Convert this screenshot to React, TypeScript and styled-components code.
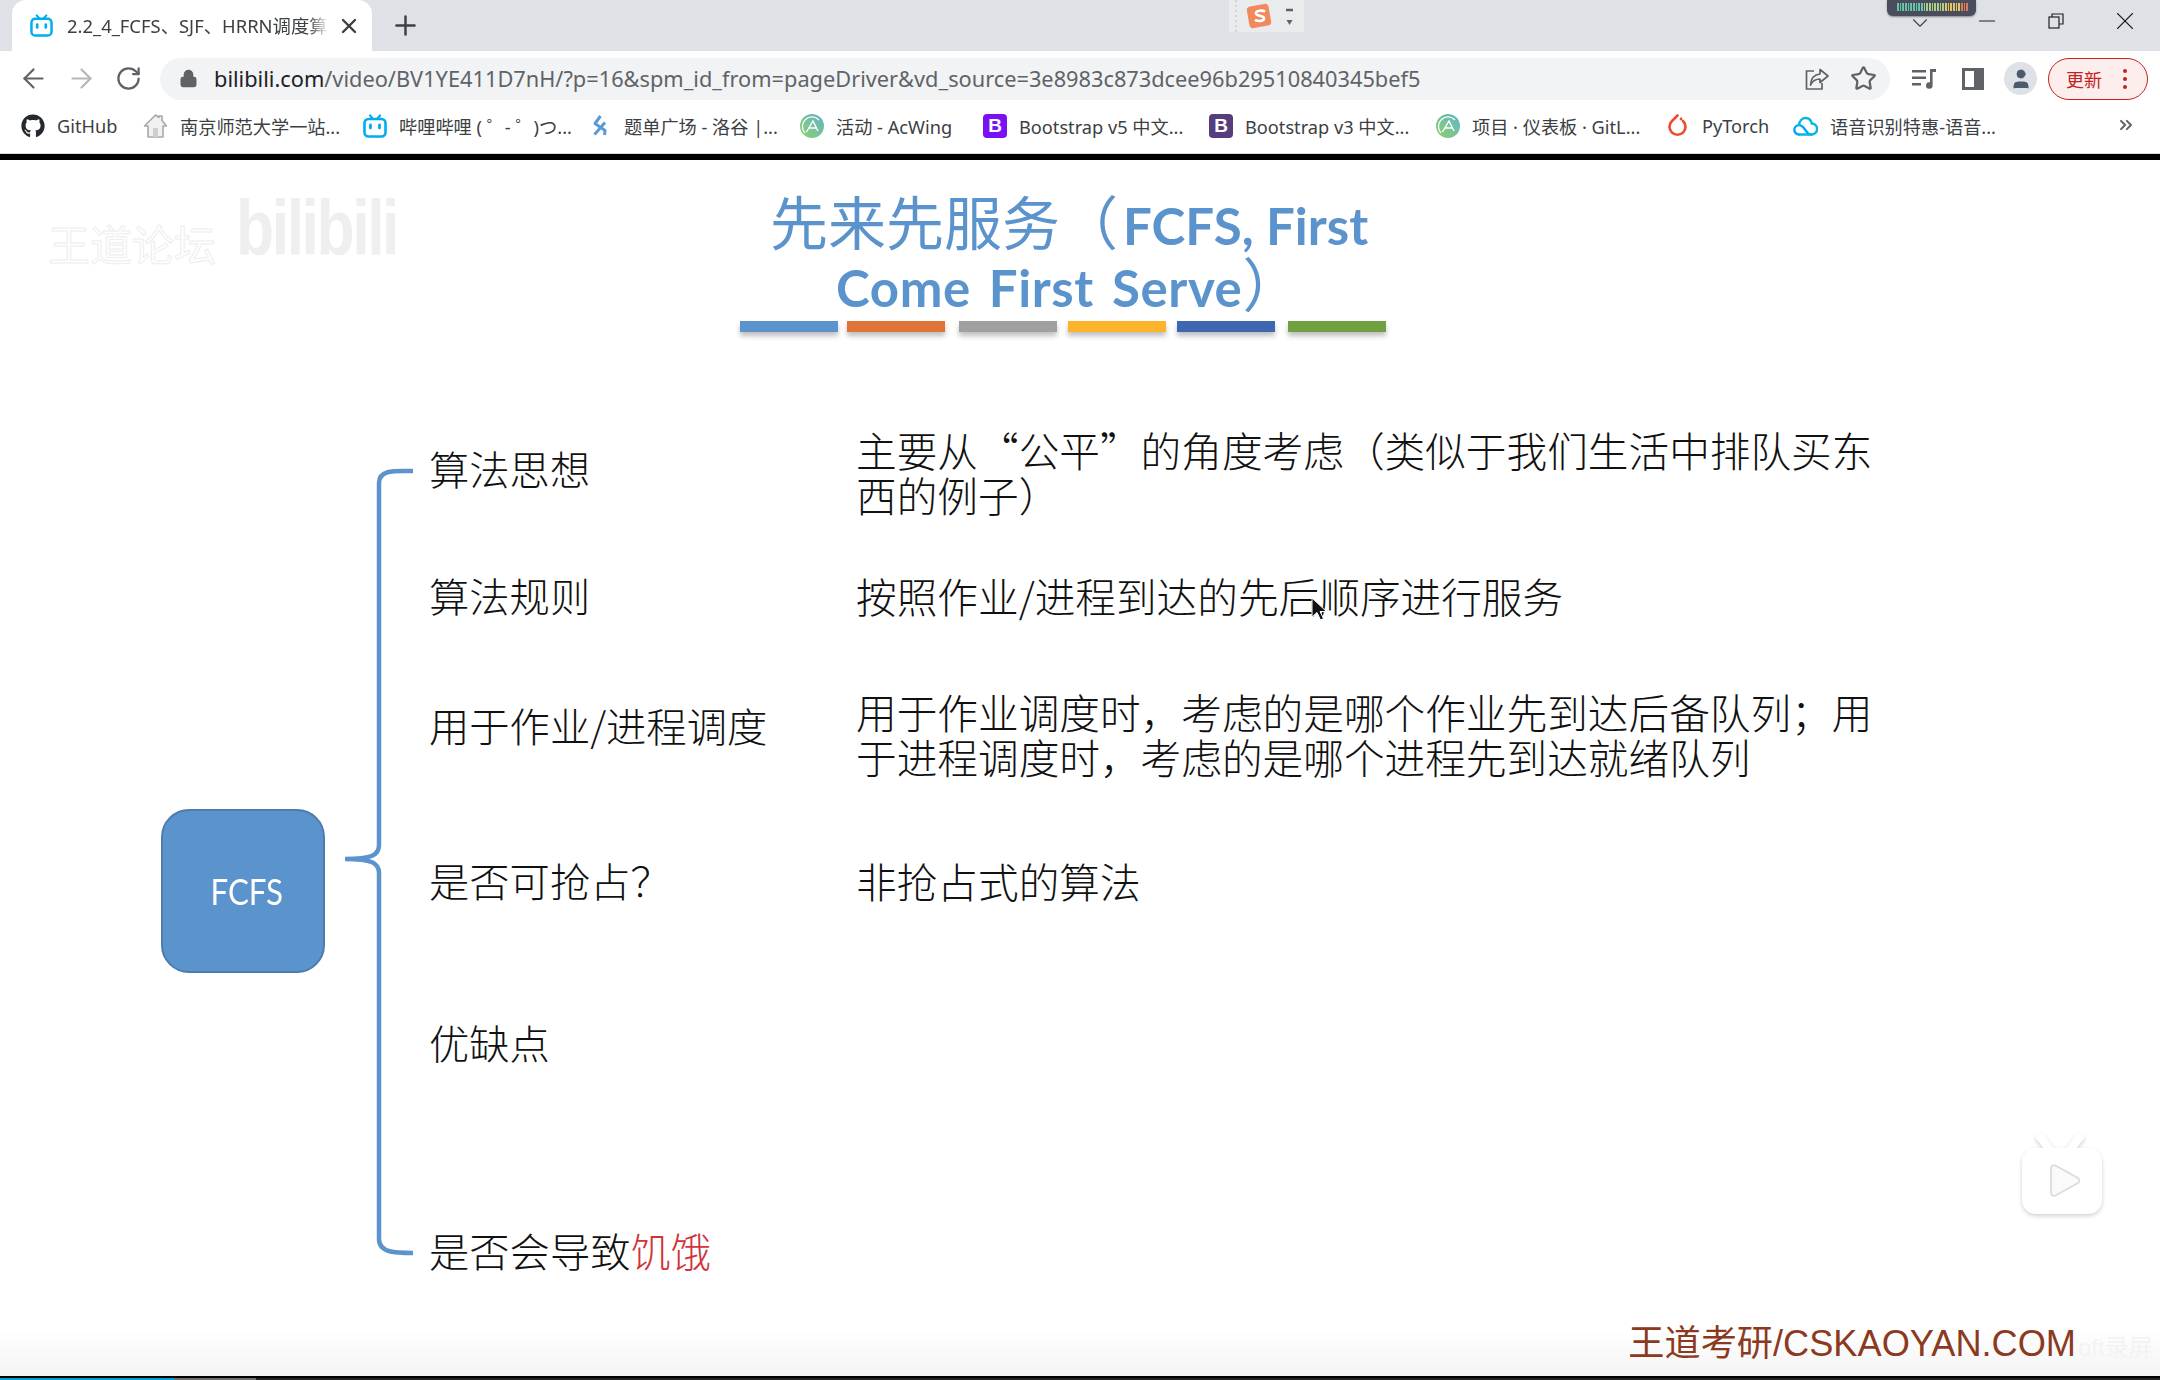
import React from 'react';
import styled, { createGlobalStyle } from 'styled-components';
import { FaGithub } from 'react-icons/fa';
import { ArrowLeft, ArrowRight, RotateCw, Lock, Star, Plus, X, Minus, ChevronsRight, ChevronDown, User } from 'lucide-react';

const CJK = '"Noto Sans CJK SC", sans-serif';
const UI = '"Noto Sans", "Noto Sans CJK SC", sans-serif';
const BLUE = '#5b93cd';

const GlobalStyle = createGlobalStyle`
  html, body { margin: 0; padding: 0; background: #fff; }
  body { width: 2160px; height: 1380px; overflow: hidden; font-family: ${UI}; }
`;

const Page = styled.div`
  width: 2160px;
  height: 1380px;
  display: flex;
  flex-direction: column;
  position: relative;
  overflow: hidden;
`;

/* browser chrome */
const TabStrip = styled.div`
  height: 51px;
  background: #dee1e6;
  display: flex;
  align-items: flex-end;
  padding-left: 12px;
  position: relative;
`;

const Tab = styled.div`
  width: 360px;
  height: 51px;
  background: #fff;
  border-radius: 14px 14px 0 0;
  display: flex;
  align-items: center;
  box-sizing: border-box;
  padding-left: 18px;
  gap: 14px;
  color: #3c4043;
`;

const TabTitle = styled.span`
  width: 262px;
  font-size: 18.4px;
  line-height: 51px;
  white-space: nowrap;
  overflow: hidden;
  -webkit-mask-image: linear-gradient(90deg, #000 92%, transparent);
  mask-image: linear-gradient(90deg, #000 92%, transparent);
`;

const IconSlot = styled.div<{ $w: number }>`
  width: ${p => p.$w}px;
  height: 16px;
  flex: none;
  display: flex;
  align-items: center;
  justify-content: center;
  svg { flex: none; }
`;

const NewTab = styled(IconSlot)`
  align-self: center;
  margin-left: 24px;
  color: #3c4043;
`;

const WindowButtons = styled.div`
  margin-left: auto;
  display: flex;
  align-self: flex-start;
  gap: 53px;
  padding: 13px 27px 0 0;
  color: #202124;
`;

const ImeBar = styled.div`
  position: absolute;
  left: 1229px;
  top: 0;
  width: 75px;
  height: 32px;
  background: #e9ebed;
`;

const Meter = styled.div`
  position: absolute;
  left: 1887px;
  top: 0;
  width: 89px;
  height: 16px;
  background: #4a4e5c;
  border-radius: 0 0 6px 6px;
  box-shadow: 0 1px 2px rgba(0, 0, 0, 0.4);
  display: flex;
  padding: 3px 0 0 10px;
  box-sizing: border-box;
  gap: 1px;
`;

const MeterTick = styled.i<{ $c: string }>`
  width: 2px;
  height: 8px;
  background: ${p => p.$c};
`;

const FoldChevron = styled.div`
  position: absolute;
  left: 1907px;
  top: 10px;
  display: flex;
  color: #3c4043;
`;

const Toolbar = styled.div`
  height: 51px;
  background: #fff;
  display: flex;
  align-items: center;
  position: relative;
  box-sizing: border-box;
  padding-top: 4px;
`;

const NavButton = styled.div<{ $x: number; $c?: string }>`
  display: flex;
  width: 26px;
  justify-content: center;
  margin-left: ${p => p.$x}px;
  color: ${p => p.$c || '#5f6368'};
  svg { flex: none; }
`;

const Omnibox = styled.div`
  margin-left: 19px;
  width: 1730px;
  height: 42px;
  border-radius: 21px;
  background: #f1f3f4;
  display: flex;
  align-items: center;
  box-sizing: border-box;
  padding: 0 13px 0 19px;
  color: #5f6368;
`;

const Url = styled.div`
  font-size: 21.78px;
  margin-left: 16px;
  white-space: nowrap;
  color: #5f6368;
  b { font-weight: 400; color: #202124; }
`;

const OmniIcons = styled.div`
  margin-left: auto;
  display: flex;
  align-items: center;
  gap: 21px;
  color: #5f6368;
`;

const Avatar = styled.div`
  width: 33px;
  height: 33px;
  margin-left: 18px;
  border-radius: 50%;
  background: #dee1e6;
  color: #4d5a6b;
  display: flex;
  align-items: center;
  justify-content: center;
`;

const UpdateButton = styled.div`
  width: 100px;
  height: 42px;
  margin-left: 11px;
  box-sizing: border-box;
  border: 1.5px solid #c5221f;
  border-radius: 21px;
  background: #fbeeed;
  color: #c5221f;
  font-family: ${CJK};
  font-size: 18px;
  display: flex;
  align-items: center;
  padding-left: 17px;
  gap: 21px;
`;

const UpdateDots = styled.div`
  display: flex;
  flex-direction: column;
  gap: 4px;
  i { width: 4px; height: 4px; border-radius: 50%; background: #c5221f; display: block; }
`;

const Bookmarks = styled.div`
  height: 52px;
  box-sizing: border-box;
  background: #fff;
  border-bottom: 1px solid #d6d8db;
  display: flex;
  align-items: center;
  padding: 0 0 3px 21px;
  position: relative;
`;

const Bookmark = styled.div<{ $w: number; $gap?: number }>`
  width: ${p => p.$w}px;
  flex: none;
  display: flex;
  align-items: center;
  gap: ${p => p.$gap ?? 12}px;
  font-size: 18.2px;
  color: #3c4043;
  white-space: nowrap;
`;

const BootstrapBadge = styled.span<{ $bg: string }>`
  width: 24px;
  height: 24px;
  flex: none;
  border-radius: 4px;
  background: ${p => p.$bg};
  color: #fff;
  font: 700 19px/24px "Liberation Sans", sans-serif;
  text-align: center;
`;

const MoreBookmarks = styled.div`
  position: absolute;
  right: 24px;
  top: 13px;
  color: #5f6368;
  display: flex;
`;

/* slide */
const Slide = styled.div`
  flex: 1;
  position: relative;
  display: flex;
  flex-direction: column;
  border-top: 6px solid #000;
  background: linear-gradient(180deg, #fff 0, #fff 1170px, #f4f4f4 1215px);
`;

const TitleBlock = styled.div`
  margin-top: 32px;
  display: flex;
  flex-direction: column;
  align-items: flex-start;
  color: ${BLUE};
  font-family: ${CJK};
  font-size: 58px;
  line-height: 57px;
  filter: blur(0.4px);
`;

const TitleLine = styled.div<{ $ml: number; $wide?: boolean }>`
  margin-left: ${p => p.$ml}px;
  white-space: nowrap;
  b {
    font-family: Lato, sans-serif;
    font-weight: 700;
    font-size: 51px;
    margin-left: ${p => (p.$wide ? '0' : '5px')};
    letter-spacing: ${p => (p.$wide ? '0.6px' : '0')};
    word-spacing: ${p => (p.$wide ? '5px' : '0')};
  }
`;

const BarRow = styled.div`
  margin: 5px 0 0 740px;
  display: flex;
  height: 11px;
`;

const Bar = styled.div<{ $c: string; $ml: number }>`
  width: 98px;
  margin-left: ${p => p.$ml}px;
  background: ${p => p.$c};
  box-shadow: 0 4px 5px rgba(0, 0, 0, 0.25);
`;

const Diagram = styled.div`
  margin-top: 106px;
  padding-left: 161px;
  display: flex;
  align-items: flex-start;
`;

const RootNode = styled.div`
  width: 164px;
  height: 164px;
  margin-top: 371px;
  box-sizing: border-box;
  border: 2px solid #4d7dac;
  border-radius: 28px;
  background: ${BLUE};
  color: #fff;
  font: 400 36px/160px Lato, sans-serif;
  text-align: center;
  flex: none;
  padding-left: 8px;
`;

const RootLabel = styled.span`
  display: inline-block;
  transform: scaleX(0.87);
`;

const Brace = styled.svg`
  margin: 1px 0 0 20px;
  flex: none;
`;

const Rows = styled.div`
  margin-left: 16px;
  display: flex;
  flex-direction: column;
`;

const Row = styled.div<{ $mt: number }>`
  height: 60px;
  margin-top: ${p => p.$mt}px;
  display: flex;
  align-items: center;
  font-family: ${CJK};
  font-weight: 300;
  color: #111;
  white-space: nowrap;
`;

const Label = styled.div`
  width: 427px;
  flex: none;
  font-size: 40.3px;
  line-height: 48px;
`;

const Detail = styled.div<{ $mt?: number }>`
  font-size: 40.66px;
  line-height: 45px;
  margin-top: ${p => p.$mt ?? 0}px;
`;

const Hot = styled.span`
  color: #d0343a;
`;

const Footer = styled.div`
  margin: auto 84px 9px auto;
  font: 400 36.2px/46px "Liberation Sans", ${CJK};
  color: #8c3a1f;
  white-space: nowrap;
  position: relative;
`;

const FaintTail = styled.span`
  position: absolute;
  left: 100%;
  margin-left: 2px;
  top: 4px;
  font-size: 24px;
  color: #f3f3f3;
`;

const Watermark = styled.div`
  position: absolute;
  left: 48px;
  top: 28px;
  display: flex;
  align-items: flex-end;
  gap: 20px;
  font-family: ${CJK};
`;

const WatermarkText = styled.span`
  font-size: 42px;
  line-height: 50px;
  color: #fff;
  -webkit-text-stroke: 1px #eeeeee;
`;

const WatermarkLogo = styled.span`
  font: 700 78px/80px "Liberation Sans", sans-serif;
  letter-spacing: -3px;
  color: #efefef;
  transform-origin: left bottom;
  transform: scaleX(0.8);
  display: block;
`;

const Pointer = styled.svg`
  position: absolute;
  left: 1311px;
  top: 437px;
`;

const PlayBadge = styled.svg`
  position: absolute;
  left: 2016px;
  top: 974px;
  filter: drop-shadow(0 2px 2px rgba(0, 0, 0, 0.18));
`;

const ProgressTrack = styled.div`
  height: 4px;
  box-sizing: border-box;
  border-top: 2px solid #000;
  background: #222;
  display: flex;
`;

const ProgressPart = styled.div<{ $w: number; $c: string }>`
  width: ${p => p.$w}px;
  background: ${p => p.$c};
`;

function BiliIcon({ size = 24 }: { size?: number }) {
  return (
    <svg width={size} height={size} viewBox="0 0 24 24" fill="none" style={{ flex: 'none' }}>
      <path d="M7 1.5 10 5M17 1.5 14 5" stroke="#00aeec" strokeWidth="2.2" strokeLinecap="round" />
      <rect x="1.5" y="5" width="21" height="17.5" rx="4" stroke="#00aeec" strokeWidth="2.6" />
      <path d="M7.5 11v3M16.5 11v3" stroke="#00aeec" strokeWidth="2.8" strokeLinecap="round" />
    </svg>
  );
}

function HouseIcon() {
  return (
    <svg width="25" height="26" viewBox="0 0 25 26" style={{ flex: 'none' }}>
      <path d="M12.5 2 1.5 13h3.500v11h15V13h3.500L19 7.500V3h-3v1.500z" fill="#f1f1f1" stroke="#a9a9a9" strokeWidth="1.600" strokeLinejoin="round" />
      <rect x="10" y="15" width="5" height="9" fill="#cfcfcf" />
    </svg>
  );
}

function LuoguIcon() {
  return (
    <svg width="16" height="22" viewBox="0 0 16 22" fill="none" style={{ flex: 'none' }}>
      <path d="M8.500 1 3 8.500 13 15.500 12.500 20M13 7.500 2.500 19.500" stroke="#5b9bd5" strokeWidth="3" strokeLinejoin="round" />
    </svg>
  );
}

function AcwingIcon() {
  return (
    <svg width="24" height="24" viewBox="0 0 24 24" fill="none" style={{ flex: 'none' }}>
      <defs>
        <linearGradient id="acw" x1="0" y1="1" x2="1" y2="0">
          <stop offset="0" stopColor="#8fd16b" />
          <stop offset="1" stopColor="#5fb4c9" />
        </linearGradient>
      </defs>
      <circle cx="12" cy="12" r="12" fill="url(#acw)" />
      <path d="M5 19A9.500 9.500 0 0 1 19 6" stroke="#fff" strokeWidth="1.300" />
      <path d="M6.500 18 13 7l5 10M9 14h7" stroke="#fff" strokeWidth="1.400" />
    </svg>
  );
}

function TorchIcon() {
  return (
    <svg width="19" height="24" viewBox="0 0 19 24" fill="none" style={{ flex: 'none' }}>
      <path d="M9.500 1.500 4 7a8 8 0 1 0 11 0" stroke="#ee4c2c" strokeWidth="2.600" strokeLinecap="round" />
      <circle cx="13" cy="5" r="1.400" fill="#ee4c2c" />
    </svg>
  );
}

function CloudIcon() {
  return (
    <svg width="25" height="20" viewBox="0 0 25 20" fill="none" style={{ flex: 'none' }}>
      <path d="M6 18.500a4.700 4.700 0 0 1 0-9.400c2.500 0 4 1.500 6 4.400l2.500 3.200c1 1.200 2 1.800 4 1.800" stroke="#00a4ff" strokeWidth="2.400" strokeLinecap="round" />
      <path d="M6 9C6.500 4.500 9.500 2 12.500 2c3 0 5.500 2 6.300 5.500a5.500 5.500 0 0 1-.3 11H6" stroke="#06b6e8" strokeWidth="2.400" strokeLinecap="round" />
    </svg>
  );
}

function ShareIcon() {
  return (
    <svg width="24" height="22" viewBox="0 0 24 22" fill="none">
      <path d="M9 3H1.500v18H17v-6" stroke="#5f6368" strokeWidth="1.700" />
      <path d="M15 1.500 23 8l-8 6.500V11C10.500 11 7.500 13 5.500 17c.5-6.500 4-10.500 9.500-11z" stroke="#5f6368" strokeWidth="1.700" strokeLinejoin="round" />
    </svg>
  );
}

function MediaIcon() {
  return (
    <svg width="24" height="22" viewBox="0 0 24 22" fill="#5f6368">
      <path d="M0 2h14v2.600H0zM0 8.500h14v2.600H0zM0 15h9v2.600H0z" />
      <path d="M18 1h6v3h-3.400v13.500a3.300 3.300 0 1 1-2.600-3.200z" />
    </svg>
  );
}

function PanelIcon() {
  return (
    <svg width="22" height="22" viewBox="0 0 22 22">
      <path fillRule="evenodd" fill="#5f6368" d="M0 0h22v22H0zM3 3v16h9V3z" />
    </svg>
  );
}

function RestoreIcon() {
  return (
    <svg width="16" height="16" viewBox="0 0 16 16" fill="none" stroke="#202124" strokeWidth="1.200">
      <rect x="1" y="4" width="10" height="11" />
      <path d="M4 4V1h11v10h-4" />
    </svg>
  );
}

function SogouMark() {
  return (
    <svg width="75" height="32" viewBox="0 0 75 32" fill="none">
      <path d="M7 0v32" stroke="#c9cbce" strokeWidth="1.500" strokeDasharray="2 3" />
      <rect x="19" y="5" width="22" height="22" rx="4" fill="#f08a5d" transform="rotate(-10 30 16)" />
      <path d="M36 11.500c-3-1.500-9-1.200-9 1.800 0 3.500 8 1.500 8 5.200 0 3-6 3-9 1.300" stroke="#fff" strokeWidth="2.600" />
      <path d="M57 10h7" stroke="#5f6368" strokeWidth="2.500" />
      <path d="M57.500 20h6l-3 5z" fill="#5f6368" />
    </svg>
  );
}

const METER_COLORS = Array.from({ length: 30 }, (_, i) => {
  if (i < 10) return '#63c7a8';
  if (i < 18) return '#a9cf86';
  if (i < 24) return '#e3c75e';
  if (i < 27) return '#e07a5f';
  return '#4a4e5c';
});

const BAR_ITEMS = [
  { c: '#5b93cd', ml: 0 },
  { c: '#e07338', ml: 9 },
  { c: '#a0a0a0', ml: 14 },
  { c: '#fdb32a', ml: 11 },
  { c: '#3f67b1', ml: 11 },
  { c: '#70a040', ml: 13 }
];

export default function App() {
  return (
    <Page>
      <GlobalStyle />
      <TabStrip>
        <Tab>
          <BiliIcon size={23} />
          <TabTitle>2.2_4_FCFS、SJF、HRRN调度算法</TabTitle>
          <IconSlot $w={12}>
            <X size={24} strokeWidth={2.4} color="#3c4043" />
          </IconSlot>
        </Tab>
        <NewTab $w={18}>
          <Plus size={31} strokeWidth={1.9} />
        </NewTab>
        <ImeBar>
          <SogouMark />
        </ImeBar>
        <Meter>
          {METER_COLORS.map((c, i) => (
            <MeterTick key={i} $c={c} />
          ))}
        </Meter>
        <FoldChevron>
          <ChevronDown size={26} strokeWidth={1} />
        </FoldChevron>
        <WindowButtons>
          <IconSlot $w={16}>
            <Minus size={26} strokeWidth={1} />
          </IconSlot>
          <IconSlot $w={16}>
            <RestoreIcon />
          </IconSlot>
          <IconSlot $w={16}>
            <X size={30} strokeWidth={0.9} />
          </IconSlot>
        </WindowButtons>
      </TabStrip>

      <Toolbar>
        <NavButton $x={20}>
          <ArrowLeft size={31} strokeWidth={1.7} />
        </NavButton>
        <NavButton $x={22} $c="#b4b7bb">
          <ArrowRight size={31} strokeWidth={1.7} />
        </NavButton>
        <NavButton $x={21}>
          <RotateCw size={27} strokeWidth={2} />
        </NavButton>
        <Omnibox>
          <Lock size={19} fill="#5f6368" strokeWidth={2.2} />
          <Url>
            <b>bilibili.com</b>/video/BV1YE411D7nH/?p=16&amp;spm_id_from=pageDriver&amp;vd_source=3e8983c873dcee96b29510840345bef5
          </Url>
          <OmniIcons>
            <ShareIcon />
            <Star size={27} strokeWidth={2} />
          </OmniIcons>
        </Omnibox>
        <NavButton $x={21}>
          <MediaIcon />
        </NavButton>
        <NavButton $x={23}>
          <PanelIcon />
        </NavButton>
        <Avatar>
          <User size={24} fill="#4d5a6b" strokeWidth={1} />
        </Avatar>
        <UpdateButton>
          更新
          <UpdateDots>
            <i />
            <i />
            <i />
          </UpdateDots>
        </UpdateButton>
      </Toolbar>

      <Bookmarks>
        <Bookmark $w={122}>
          <FaGithub size={24} color="#24292f" style={{ flex: 'none' }} />
          GitHub
        </Bookmark>
        <Bookmark $w={220}>
          <HouseIcon />
          南京师范大学一站...
        </Bookmark>
        <Bookmark $w={229}>
          <BiliIcon />
          哔哩哔哩 ( ゜- ゜)つ...
        </Bookmark>
        <Bookmark $w={208} $gap={16}>
          <LuoguIcon />
          题单广场 - 洛谷 |...
        </Bookmark>
        <Bookmark $w={183}>
          <AcwingIcon />
          活动 - AcWing
        </Bookmark>
        <Bookmark $w={226}>
          <BootstrapBadge $bg="#7911f5">B</BootstrapBadge>
          Bootstrap v5 中文...
        </Bookmark>
        <Bookmark $w={227}>
          <BootstrapBadge $bg="#563d7c">B</BootstrapBadge>
          Bootstrap v3 中文...
        </Bookmark>
        <Bookmark $w={232}>
          <AcwingIcon />
          项目 · 仪表板 · GitL...
        </Bookmark>
        <Bookmark $w={125} $gap={15}>
          <TorchIcon />
          PyTorch
        </Bookmark>
        <Bookmark $w={240}>
          <CloudIcon />
          语音识别特惠-语音...
        </Bookmark>
        <MoreBookmarks>
          <ChevronsRight size={20} strokeWidth={2.4} />
        </MoreBookmarks>
      </Bookmarks>

      <Slide>
        <Watermark>
          <WatermarkText>王道论坛</WatermarkText>
          <WatermarkLogo>bilibili</WatermarkLogo>
        </Watermark>

        <TitleBlock>
          <TitleLine $ml={770}>
            先来先服务（<b>FCFS, First</b>
          </TitleLine>
          <TitleLine $ml={836} $wide>
            <b>Come First Serve</b>）
          </TitleLine>
        </TitleBlock>
        <BarRow>
          {BAR_ITEMS.map(bar => (
            <Bar key={bar.c} $c={bar.c} $ml={bar.ml} />
          ))}
        </BarRow>

        <Diagram>
          <RootNode>
            <RootLabel>FCFS</RootLabel>
          </RootNode>
          <Brace width="68" height="830" viewBox="345 440 68 830" fill="none">
            <path
              d="M413 472C396 472 379 470 379 484V846C379 856 372 860 345 860C372 860 379 864 379 874V1240C379 1254 396 1254 413 1254"
              stroke={BLUE}
              strokeWidth="4.500"
            />
          </Brace>
          <Rows>
            <Row $mt={0}>
              <Label>算法思想</Label>
              <Detail $mt={8}>
                主要从“公平”的角度考虑（类似于我们生活中排队买东
                <br />
                西的例子）
              </Detail>
            </Row>
            <Row $mt={67}>
              <Label>算法规则</Label>
              <Detail>按照作业/进程到达的先后顺序进行服务</Detail>
            </Row>
            <Row $mt={70}>
              <Label>用于作业/进程调度</Label>
              <Detail $mt={18}>
                用于作业调度时，考虑的是哪个作业先到达后备队列；用
                <br />
                于进程调度时，考虑的是哪个进程先到达就绪队列
              </Detail>
            </Row>
            <Row $mt={95}>
              <Label>是否可抢占？</Label>
              <Detail>非抢占式的算法</Detail>
            </Row>
            <Row $mt={102}>
              <Label>优缺点</Label>
            </Row>
            <Row $mt={148}>
              <Label>
                是否会导致<Hot>饥饿</Hot>
              </Label>
            </Row>
          </Rows>
        </Diagram>

        <Footer>
          王道考研/CSKAOYAN.COM
          <FaintTail>oft录屏</FaintTail>
        </Footer>

        <Pointer width="16" height="24" viewBox="0 0 16 24">
          <path d="M1 1v19l5-4.500 3.500 7.500 3-1.500L9 14.500h6.500z" fill="#111" stroke="#fff" strokeWidth="1" />
        </Pointer>

        <PlayBadge width="88" height="86" viewBox="0 0 88 86" fill="none">
          <path d="M24 3 34 16M64 3 54 16" stroke="#fff" strokeWidth="8" strokeLinecap="round" />
          <rect x="6" y="14" width="80" height="66" rx="14" fill="#fff" />
          <path d="M35 34a3 3 0 0 1 4.500-2.500L62 44a3 3 0 0 1 0 5L39.500 61.500A3 3 0 0 1 35 59z" fill="#fafafa" stroke="#dcdcdc" strokeWidth="1.800" />
        </PlayBadge>
      </Slide>

      <ProgressTrack>
        <ProgressPart $w={174} $c="#00a1d6" />
        <ProgressPart $w={82} $c="#6f6f6f" />
      </ProgressTrack>
    </Page>
  );
}
